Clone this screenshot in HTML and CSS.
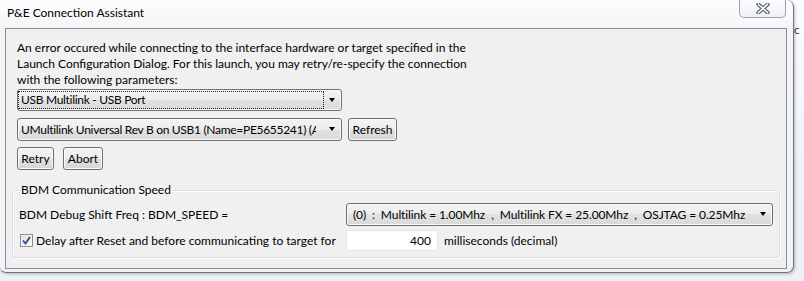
FILE: index.html
```html
<!DOCTYPE html>
<html lang="en">
<head>
    <meta charset="UTF-8">
    <title>P&amp;E Connection Assistant</title>
    <link rel="stylesheet" href="styles.css">
</head>
<body>
    <span class="behind">c</span>
    <div class="window">
        <div class="titlebar">
            <span class="title">P&amp;E Connection Assistant</span>
            <div class="close-btn">
                <svg width="14" height="11" viewBox="0 0 14 11">
                    <path d="M2.5 1.5 L11.5 9.5 M11.5 1.5 L2.5 9.5" stroke="#56606e" stroke-width="3.8" stroke-linecap="square" fill="none"/>
                    <path d="M2.5 1.5 L11.5 9.5 M11.5 1.5 L2.5 9.5" stroke="#fbfcfd" stroke-width="1.6" stroke-linecap="square" fill="none"/>
                </svg>
            </div>
        </div>
        <div class="client">
            <p class="message">An error occured while connecting to the interface hardware or target specified in the<br>Launch Configuration Dialog. For this launch, you may retry/re-specify the connection<br>with the following parameters:</p>

            <div class="combo combo-port">
                <span class="combo-text focused">USB Multilink - USB Port</span>
                <span class="arrow"></span>
            </div>

            <div class="row">
                <div class="combo combo-port">
                    <span class="combo-text">UMultilink Universal Rev B on USB1 (Name=PE5655241) (A</span>
                    <span class="arrow"></span>
                </div>
                <div class="btn btn-refresh">Refresh</div>
            </div>

            <div class="row">
                <div class="btn btn-retry">Retry</div>
                <div class="btn btn-abort">Abort</div>
            </div>

            <fieldset class="group">
                <legend>BDM Communication Speed</legend>
                <div class="group-grid">
                    <span class="field-label">BDM Debug Shift Freq : BDM_SPEED =</span>
                    <div class="combo combo-speed">
                        <span class="combo-text">(0)&nbsp; :&nbsp; Multilink = 1.00Mhz&nbsp; ,&nbsp; Multilink FX = 25.00Mhz&nbsp; ,&nbsp; OSJTAG = 0.25Mhz</span>
                        <span class="arrow"></span>
                    </div>

                    <div class="check">
                        <span class="check-box">
                            <svg width="9" height="9" viewBox="0 0 9 9">
                                <path d="M1 4.5 L3.5 7.5 L8 1" stroke="#2c4a8c" stroke-width="1.8" fill="none"/>
                            </svg>
                        </span>
                        Delay after Reset and before communicating to target for
                    </div>
                    <div class="delay">
                        <div class="num-box">400</div>
                        <span>milliseconds (decimal)</span>
                    </div>
                </div>
            </fieldset>
        </div>
    </div>
</body>
</html>
```

FILE: styles.css
```css
* {
    margin: 0;
    padding: 0;
    box-sizing: border-box;
}
body {
    width: 804px;
    height: 281px;
    overflow: hidden;
    position: relative;
    font-family: 'Lato', 'Noto Sans', sans-serif;
    font-size: 12px;
    color: #000;
    background: linear-gradient(#fbfcfd, #eef2f8 60%, #edf1f7);
}
.behind {
    position: absolute;
    left: 794px;
    top: 22px;
    color: #3b2a6e;
    font-size: 12px;
}
.window {
    position: relative;
    width: 794px;
    height: 273px;
    background: linear-gradient(#fdfdfe, #f3f5f8 30px, #eff2f6);
    border: 1px solid #6f747b;
    border-top: none;
    border-left: none;
    border-radius: 0 7px 7px 6px;
    box-shadow: 1px 1px 3px rgba(0, 0, 0, 0.25);
}
.titlebar {
    height: 28px;
    display: flex;
    justify-content: space-between;
    align-items: flex-start;
}
.title {
    padding: 6px 0 0 7px;
    line-height: 14px;
}
.close-btn {
    width: 47px;
    height: 18px;
    margin-right: 7px;
    border: 1px solid #9aa3ae;
    border-top: none;
    border-radius: 0 0 5px 5px;
    background: linear-gradient(#fbfbfc, #eef1f4);
    display: flex;
    justify-content: center;
    align-items: center;
}
.client {
    width: 782px;
    height: 241px;
    margin-left: 5px;
    border: 1px solid #8b8c8e;
    background: #f0f0f0;
    padding: 11px 0 0 11px;
}
.message {
    line-height: 16px;
    white-space: nowrap;
}
.combo {
    height: 22px;
    border: 1px solid #707070;
    border-radius: 3px;
    background: linear-gradient(#f4f4f4, #ececec 50%, #e2e2e2 50%, #d9d9d9);
    box-shadow: inset 0 0 0 1px #fafafa;
    display: flex;
    align-items: center;
    position: relative;
}
.combo-port {
    width: 325px;
}
.message + .combo {
    margin-top: 1px;
}
.combo-text {
    white-space: nowrap;
    overflow: hidden;
    line-height: 16px;
}
.combo-port .combo-text {
    width: 297px;
    margin-left: 1px;
    padding-left: 2px;
    letter-spacing: -0.3px;
}
.focused {
    width: 304px !important;
    outline: 1px dotted #222;
    outline-offset: 0;
}
.arrow {
    position: absolute;
    right: 6px;
    top: 8px;
    width: 0;
    height: 0;
    border-left: 3.5px solid transparent;
    border-right: 3.5px solid transparent;
    border-top: 4px solid #000;
}
.row {
    display: flex;
    gap: 9px;
    margin-top: 7px;
}
.row + .row {
    margin-top: 6px;
}
.btn {
    height: 23px;
    border: 1px solid #707070;
    border-radius: 3px;
    background: linear-gradient(#f4f4f4, #ececec 50%, #e0e0e0 50%, #d6d6d6);
    box-shadow: inset 0 0 0 1px #fafafa;
    display: flex;
    align-items: center;
    justify-content: center;
}
.btn-retry {
    width: 37px;
}
.btn-abort {
    width: 40px;
}
.btn-refresh {
    width: 49px;
    margin-left: -3px;
}
.row .combo {
    height: 23px;
}
.group {
    width: 768px;
    margin: 12px 0 0 -5px;
    padding: 0 6px 6px 6px;
    border: 1px solid #d5dfe5;
    border-radius: 3px;
    box-shadow: inset 1px 1px 0 #fff, 1px 1px 0 #fff;
}
.group legend {
    padding: 0 2px;
    line-height: 16px;
}
.group-grid {
    display: grid;
    grid-template-columns: 327px auto;
    row-gap: 4px;
    align-items: center;
    margin-top: 5px;
}
.combo-speed {
    width: 427px;
    height: 23px;
}
.combo-speed .combo-text {
    padding-left: 6px;
    letter-spacing: -0.1px;
}
.check {
    display: flex;
    align-items: center;
    gap: 3px;
    padding-left: 1px;
    white-space: nowrap;
}
.check-box {
    width: 13px;
    height: 13px;
    border: 1px solid #8e8f8f;
    background: linear-gradient(135deg, #dcdcdc, #fbfbfb);
    box-shadow: inset 0 0 0 1px #f4f4f4;
    display: flex;
    justify-content: center;
    align-items: center;
}
.delay {
    display: flex;
    align-items: center;
    gap: 6px;
}
.num-box {
    width: 92px;
    height: 21px;
    border: 1px solid #e2e6ea;
    background: #fff;
    text-align: right;
    padding-right: 6px;
    line-height: 19px;
}
```
